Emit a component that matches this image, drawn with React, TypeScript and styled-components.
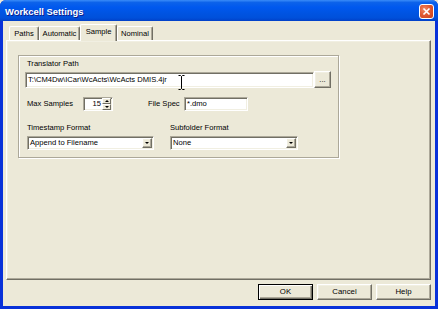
import * as React from 'react';
import styled, { createGlobalStyle } from 'styled-components';

const GlobalStyle = createGlobalStyle`
  html, body {
    margin: 0;
    padding: 0;
    background: #ece9d8;
  }
  body {
    font-family: "Liberation Sans", Arial, sans-serif;
    font-size: 7.6px;
    color: #000;
  }
`;

const Window = styled.div`
  width: 438px;
  height: 309px;
  box-sizing: border-box;
  display: flex;
  flex-direction: column;
  background: #0831d9;
  border-radius: 6px 6px 0 0;
  overflow: hidden;
`;

const TitleBar = styled.div`
  height: 21px;
  flex: none;
  display: flex;
  align-items: center;
  justify-content: space-between;
  padding: 0 4px 0 5px;
  background: linear-gradient(
    #3a8cf8 0%,
    #0c62ea 12%,
    #0058ee 35%,
    #0054e3 60%,
    #0050da 85%,
    #0140c8 100%
  );
`;

const Title = styled.div`
  color: #fff;
  font-weight: bold;
  font-size: 9.4px;
  text-shadow: 1px 1px 0 #0a1e8c;
  padding-top: 1px;
`;

const CloseButton = styled.div`
  width: 13px;
  height: 13px;
  border: 1px solid #fff;
  border-radius: 3px;
  background: radial-gradient(circle at 35% 35%, #f08a67 0%, #e15a32 45%, #c6401c 100%);
  display: flex;
  align-items: center;
  justify-content: center;
  margin-top: 1px;
`;

const Client = styled.div`
  flex: 1;
  margin: 0 3px 3px 3px;
  background: #ece9d8;
  display: flex;
  flex-direction: column;
  padding: 3px 4px 0 3px;
`;

const TabStrip = styled.div`
  height: 16px;
  display: flex;
  align-items: flex-end;
  padding-left: 3px;
`;

const Tab = styled.div<{ $w: number; $active?: boolean }>`
  width: ${(p) => p.$w}px;
  height: ${(p) => (p.$active ? 17 : 14)}px;
  box-sizing: border-box;
  position: relative;
  z-index: ${(p) => (p.$active ? 2 : 1)};
  margin-bottom: ${(p) => (p.$active ? -1 : 0)}px;
  background: #ece9d8;
  border-top: 1px solid #fff;
  border-left: 1px solid #fff;
  border-right: 1px solid #716f64;
  box-shadow: inset -1px 0 0 #aca899;
  border-radius: 2px 2px 0 0;
  display: flex;
  justify-content: center;
  padding-top: 2px;
`;

const Page = styled.div`
  height: 240px;
  box-sizing: border-box;
  border-top: 1px solid #fff;
  border-left: 1px solid #fff;
  border-right: 1px solid #716f64;
  border-bottom: 1px solid #716f64;
  box-shadow: inset -1px -1px 0 #aca899, inset 1px 1px 0 #f1efe2;
  padding: 14px 0 0 11px;
`;

const Group = styled.div`
  width: 321px;
  height: 103px;
  box-sizing: border-box;
  border: 1px solid #aca899;
  box-shadow: inset 1px 1px 0 #fff, 1px 1px 0 #fff;
  padding: 3px 0 0 6px;
  display: flex;
  flex-direction: column;
`;

const Label = styled.div<{ $w?: number; $gap?: number }>`
  height: 10px;
  line-height: 10px;
  margin-left: ${(p) => p.$gap ?? 2}px;
  white-space: nowrap;
  ${(p) => (p.$w ? `width: ${p.$w}px; flex: none;` : '')}
`;

const Row = styled.div<{ $top: number }>`
  display: flex;
  align-items: center;
  margin-top: ${(p) => p.$top}px;
`;

const Sunken = styled.div<{ $w: number; $h: number; $left?: number }>`
  width: ${(p) => p.$w}px;
  height: ${(p) => p.$h}px;
  margin-left: ${(p) => p.$left ?? 0}px;
  box-sizing: border-box;
  flex: none;
  position: relative;
  background: #fff;
  border: 1px solid;
  border-color: #aca899 #fff #fff #aca899;
  box-shadow: inset 1px 1px 0 #716f64, inset -1px -1px 0 #f1efe2;
  display: flex;
  align-items: center;
  white-space: nowrap;
`;

const FieldText = styled.span<{ $right?: boolean }>`
  padding: ${(p) => (p.$right ? '0 1px 0 0' : '0 0 0 2px')};
  text-align: ${(p) => (p.$right ? 'right' : 'left')};
  flex: 1;
  line-height: 10px;
`;

const Raised = styled.div<{ $w: number; $h: number; $default?: boolean }>`
  width: ${(p) => p.$w}px;
  height: ${(p) => p.$h}px;
  box-sizing: border-box;
  flex: none;
  background: #ece9d8;
  border: 1px solid;
  border-color: ${(p) => (p.$default ? '#000' : '#fff #716f64 #716f64 #fff')};
  box-shadow: ${(p) =>
    p.$default
      ? 'inset 1px 1px 0 #fff, inset -1px -1px 0 #716f64, inset -2px -2px 0 #aca899'
      : 'inset -1px -1px 0 #aca899, inset 1px 1px 0 #f1efe2'};
  display: flex;
  align-items: center;
  justify-content: center;
  line-height: 10px;
`;

const SpinButtons = styled.div`
  width: 9px;
  height: 100%;
  display: flex;
  flex-direction: column;
  margin-right: 1px;
`;

const SpinHalf = styled.div`
  flex: 1;
  box-sizing: border-box;
  background: #ece9d8;
  border: 1px solid;
  border-color: #fff #716f64 #716f64 #fff;
  display: flex;
  align-items: center;
  justify-content: center;
`;

const Arrow = styled.div<{ $up?: boolean; $size: number }>`
  width: 0;
  height: 0;
  border-left: ${(p) => p.$size}px solid transparent;
  border-right: ${(p) => p.$size}px solid transparent;
  ${(p) =>
    p.$up
      ? `border-bottom: ${p.$size}px solid #000;`
      : `border-top: ${p.$size}px solid #000;`}
`;

const ComboButton = styled(Raised)`
  margin-right: 1px;
`;

const Column = styled.div<{ $w: number }>`
  width: ${(p) => p.$w}px;
  display: flex;
  flex-direction: column;
`;

const Cursor = styled.svg`
  position: absolute;
  left: 152px;
  top: 2px;
`;

const Footer = styled.div`
  display: flex;
  justify-content: flex-end;
  gap: 4px;
  padding-top: 4px;
`;

const FooterButton = styled(Raised)`
  font-size: 7.8px;
`;

export default function App() {
  return (
    <>
      <GlobalStyle />
      <Window>
        <TitleBar>
          <Title>Workcell Settings</Title>
          <CloseButton>
            <svg width="9" height="9" viewBox="0 0 9 9">
              <path d="M1.5 1.5 L7.5 7.5 M7.5 1.5 L1.5 7.5" stroke="#fff" strokeWidth="1.6" />
            </svg>
          </CloseButton>
        </TitleBar>
        <Client>
          <TabStrip>
            <Tab $w={30}>Paths</Tab>
            <Tab $w={41}>Automatic</Tab>
            <Tab $w={37} $active>
              Sample
            </Tab>
            <Tab $w={36}>Nominal</Tab>
          </TabStrip>
          <Page>
            <Group>
              <Label>Translator Path</Label>
              <Row $top={2}>
                <Sunken $w={289} $h={16}>
                  <FieldText>T:\CM4Dw\ICar\WcActs\WcActs DMIS.4jr</FieldText>
                  <Cursor width="7" height="15" viewBox="0 0 7 15">
                    <path
                      d="M0.5 0.5 H2.5 L3.5 1.5 L4.5 0.5 H6.5 M3.5 1.5 V13.5 M0.5 14.5 H2.5 L3.5 13.5 L4.5 14.5 H6.5"
                      stroke="#000"
                      strokeWidth="1"
                      fill="none"
                    />
                  </Cursor>
                </Sunken>
                <Raised $w={17} $h={17}>...</Raised>
              </Row>
              <Row $top={9}>
                <Label $w={56}>Max Samples</Label>
                <Sunken $w={30} $h={14}>
                  <FieldText $right>15</FieldText>
                  <SpinButtons>
                    <SpinHalf>
                      <Arrow $up $size={2} />
                    </SpinHalf>
                    <SpinHalf>
                      <Arrow $size={2} />
                    </SpinHalf>
                  </SpinButtons>
                </Sunken>
                <Label $w={36} $gap={35}>
                  File Spec
                </Label>
                <Sunken $w={64} $h={14}>
                  <FieldText>*.dmo</FieldText>
                </Sunken>
              </Row>
              <Row $top={12}>
                <Column $w={143}>
                  <Label>Timestamp Format</Label>
                  <Row $top={3}>
                    <Sunken $w={127} $h={14} $left={2}>
                      <FieldText>Append to Filename</FieldText>
                      <ComboButton $w={10} $h={10}>
                        <Arrow $size={2.5} />
                      </ComboButton>
                    </Sunken>
                  </Row>
                </Column>
                <Column $w={130}>
                  <Label>Subfolder Format</Label>
                  <Row $top={3}>
                    <Sunken $w={128} $h={14} $left={2}>
                      <FieldText>None</FieldText>
                      <ComboButton $w={10} $h={10}>
                        <Arrow $size={2.5} />
                      </ComboButton>
                    </Sunken>
                  </Row>
                </Column>
              </Row>
            </Group>
          </Page>
          <Footer>
            <FooterButton $w={55} $h={16} $default>
              OK
            </FooterButton>
            <FooterButton $w={55} $h={16}>
              Cancel
            </FooterButton>
            <FooterButton $w={55} $h={16}>
              Help
            </FooterButton>
          </Footer>
        </Client>
      </Window>
    </>
  );
}
